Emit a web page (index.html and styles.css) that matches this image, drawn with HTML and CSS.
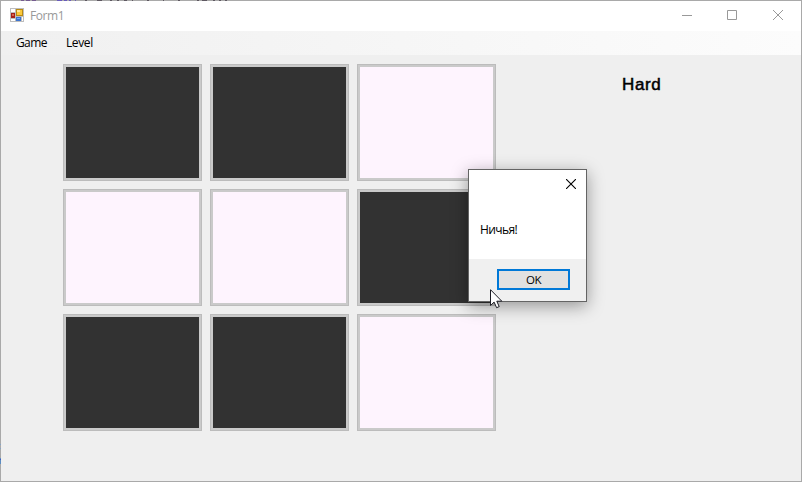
FILE: index.html
```html
<!DOCTYPE html>
<html lang="en">
<head>
<meta charset="utf-8">
<title>Form1</title>
<link rel="stylesheet" href="styles.css">
</head>
<body>
<div class="window">
  <header class="titlebar">
    <svg class="app-icon" width="14" height="14" viewBox="0 0 14 14" shape-rendering="crispEdges">
      <rect width="14" height="14" fill="#bdbdbd"/>
      <path fill="#fff" d="M1 1h4v3H1zM1 11h4v2H1zM12 9h1v4h-1z"/>
      <rect x="1" y="5" width="4" height="5" fill="#a52019"/>
      <rect x="2" y="6" width="2" height="2" fill="#d9634d"/>
      <rect x="6" y="1" width="7" height="7" fill="#b98a12"/>
      <rect x="7" y="2" width="5" height="5" fill="#fbc93c"/>
      <rect x="7" y="2" width="3" height="2" fill="#ffe595"/>
      <rect x="6" y="9" width="5" height="4" fill="#3c74d0"/>
      <rect x="7" y="10" width="3" height="1" fill="#79aaf0"/>
    </svg>
    <span class="title">Form1</span>
    <div class="controls">
      <svg width="10" height="10" viewBox="0 0 10 10"><path d="M0 5.5h10"/></svg>
      <svg width="10" height="10" viewBox="0 0 10 10"><path d="M.5.5h9v9h-9z"/></svg>
      <svg class="last" width="10" height="10" viewBox="0 0 10 10"><path d="M0 0l10 10M10 0L0 10"/></svg>
    </div>
  </header>
  <nav class="menu"><span class="item game">Game</span><span class="item level">Level</span></nav>
  <main class="content">
    <div class="board">
      <div class="cell dark"></div><div class="cell dark"></div><div class="cell"></div>
      <div class="cell"></div><div class="cell"></div><div class="cell dark"></div>
      <div class="cell dark"></div><div class="cell dark"></div><div class="cell"></div>
    </div>
    <div class="difficulty">Hard</div>
  </main>
</div>
<svg class="backdrop" width="802" height="482" viewBox="0 0 802 482" shape-rendering="crispEdges">
  <path stroke="#6a4a8a" d="M21 .5h3M26 .5h4M32 .5h4"/>
  <path stroke="#5a48c0" d="M57 .5h5M64 .5h3M69 .5h2M75 .5h1"/>
  <path stroke="#4c4450" d="M85 .5h2M97 .5h5M110 .5h2M117 .5h2M124 .5h3M132 .5h1M147 .5h2M163 .5h1M178 .5h2M197 .5h2M202 .5h5M213 .5h2M219 .5h2M225 .5h2"/>
  <path stroke="#7ba3d0" d="M.5 444v1M.5 448v1"/>
  <path stroke="#4a86c8" d="M.5 458v6"/>
  <path stroke="#2848c8" d="M.5 459v1"/>
</svg>
<div class="dialog">
  <div class="dialog-body">
    <svg class="close" width="10" height="10" viewBox="0 0 10 10"><path d="M0 0l10 10M10 0L0 10"/></svg>
    <p class="message">Ничья!</p>
  </div>
  <div class="dialog-footer"><button class="ok">OK</button></div>
</div>
<svg class="cursor" width="13" height="20" viewBox="0 0 13 20"><path d="M.5.7v15.8l3.6-3.4 2.5 5.6 2.6-1.1-2.4-5.4h5z"/></svg>
</body>
</html>
```
FILE: styles.css
```css
* { box-sizing: border-box; }
body {
  margin: 0;
  width: 802px;
  height: 482px;
  overflow: hidden;
  font: 12px/16px "Open Sans", "Noto Sans", sans-serif;
  color: #000;
}
.window {
  display: flex;
  flex-direction: column;
  height: 482px;
  border: 1px solid #a9a9a9;
  background: #efefef;
}
.titlebar {
  display: flex;
  align-items: flex-start;
  height: 30px;
  padding: 7px 18px 0 9px;
  background: #fff;
}
.app-icon { margin-right: 6px; }
.title { color: #999; letter-spacing: -0.45px; }
.controls {
  display: flex;
  gap: 35px;
  margin: 2px 0 0 auto;
}
.controls svg { fill: none; stroke: #999; }
.controls .last { margin-left: 1px; }
.menu {
  display: flex;
  height: 24px;
  padding: 4px 0 0 15px;
  background: linear-gradient(90deg, #f0f0f0, #fcfcfc);
}
.item { width: 50px; }
.game { letter-spacing: -0.6px; }
.level { letter-spacing: -0.4px; }
.content { display: flex; padding: 9px 0 0 62px; }
.board {
  display: grid;
  grid-template-columns: repeat(3, 139px);
  grid-auto-rows: 117px;
  gap: 8px;
}
.cell {
  border: 1px solid #bcbcbc;
  box-shadow: inset 0 0 0 2px #cacaca;
  background: #fef4fe;
}
.dark { background: #323232; }
.difficulty {
  margin: 10px 0 0 126px;
  font: 17px/22px "Liberation Sans", sans-serif;
  letter-spacing: 0.6px;
  -webkit-text-stroke: 0.5px #000;
}
.backdrop {
  position: absolute;
  left: 0;
  top: 0;
  fill: none;
  opacity: 0.8;
}
.dialog {
  position: absolute;
  left: 468px;
  top: 169px;
  width: 119px;
  height: 133px;
  border: 1px solid #646464;
  background: #fff;
  box-shadow: 0 4px 16px rgba(0, 0, 0, 0.38);
}
.dialog-body {
  display: flex;
  flex-direction: column;
  height: 89px;
  padding: 9px 10px 0 11px;
}
.close { align-self: flex-end; fill: none; stroke: #000; stroke-width: 1.1; }
.message { margin: 33px 0 0; letter-spacing: -0.6px; font-size: 12px; }
.dialog-footer {
  display: flex;
  justify-content: flex-end;
  height: 42px;
  padding: 10px 16px 0 0;
  background: #f0f0f0;
}
.ok {
  width: 73px;
  height: 21px;
  padding: 0;
  border: 2px solid #0078d7;
  background: #e1e1e1;
  color: #000;
  font: 11.5px/17px "Open Sans", sans-serif;
  letter-spacing: -0.6px;
}
.cursor {
  position: absolute;
  left: 490px;
  top: 289px;
  fill: #fff;
  stroke: #1c1c24;
}
```
